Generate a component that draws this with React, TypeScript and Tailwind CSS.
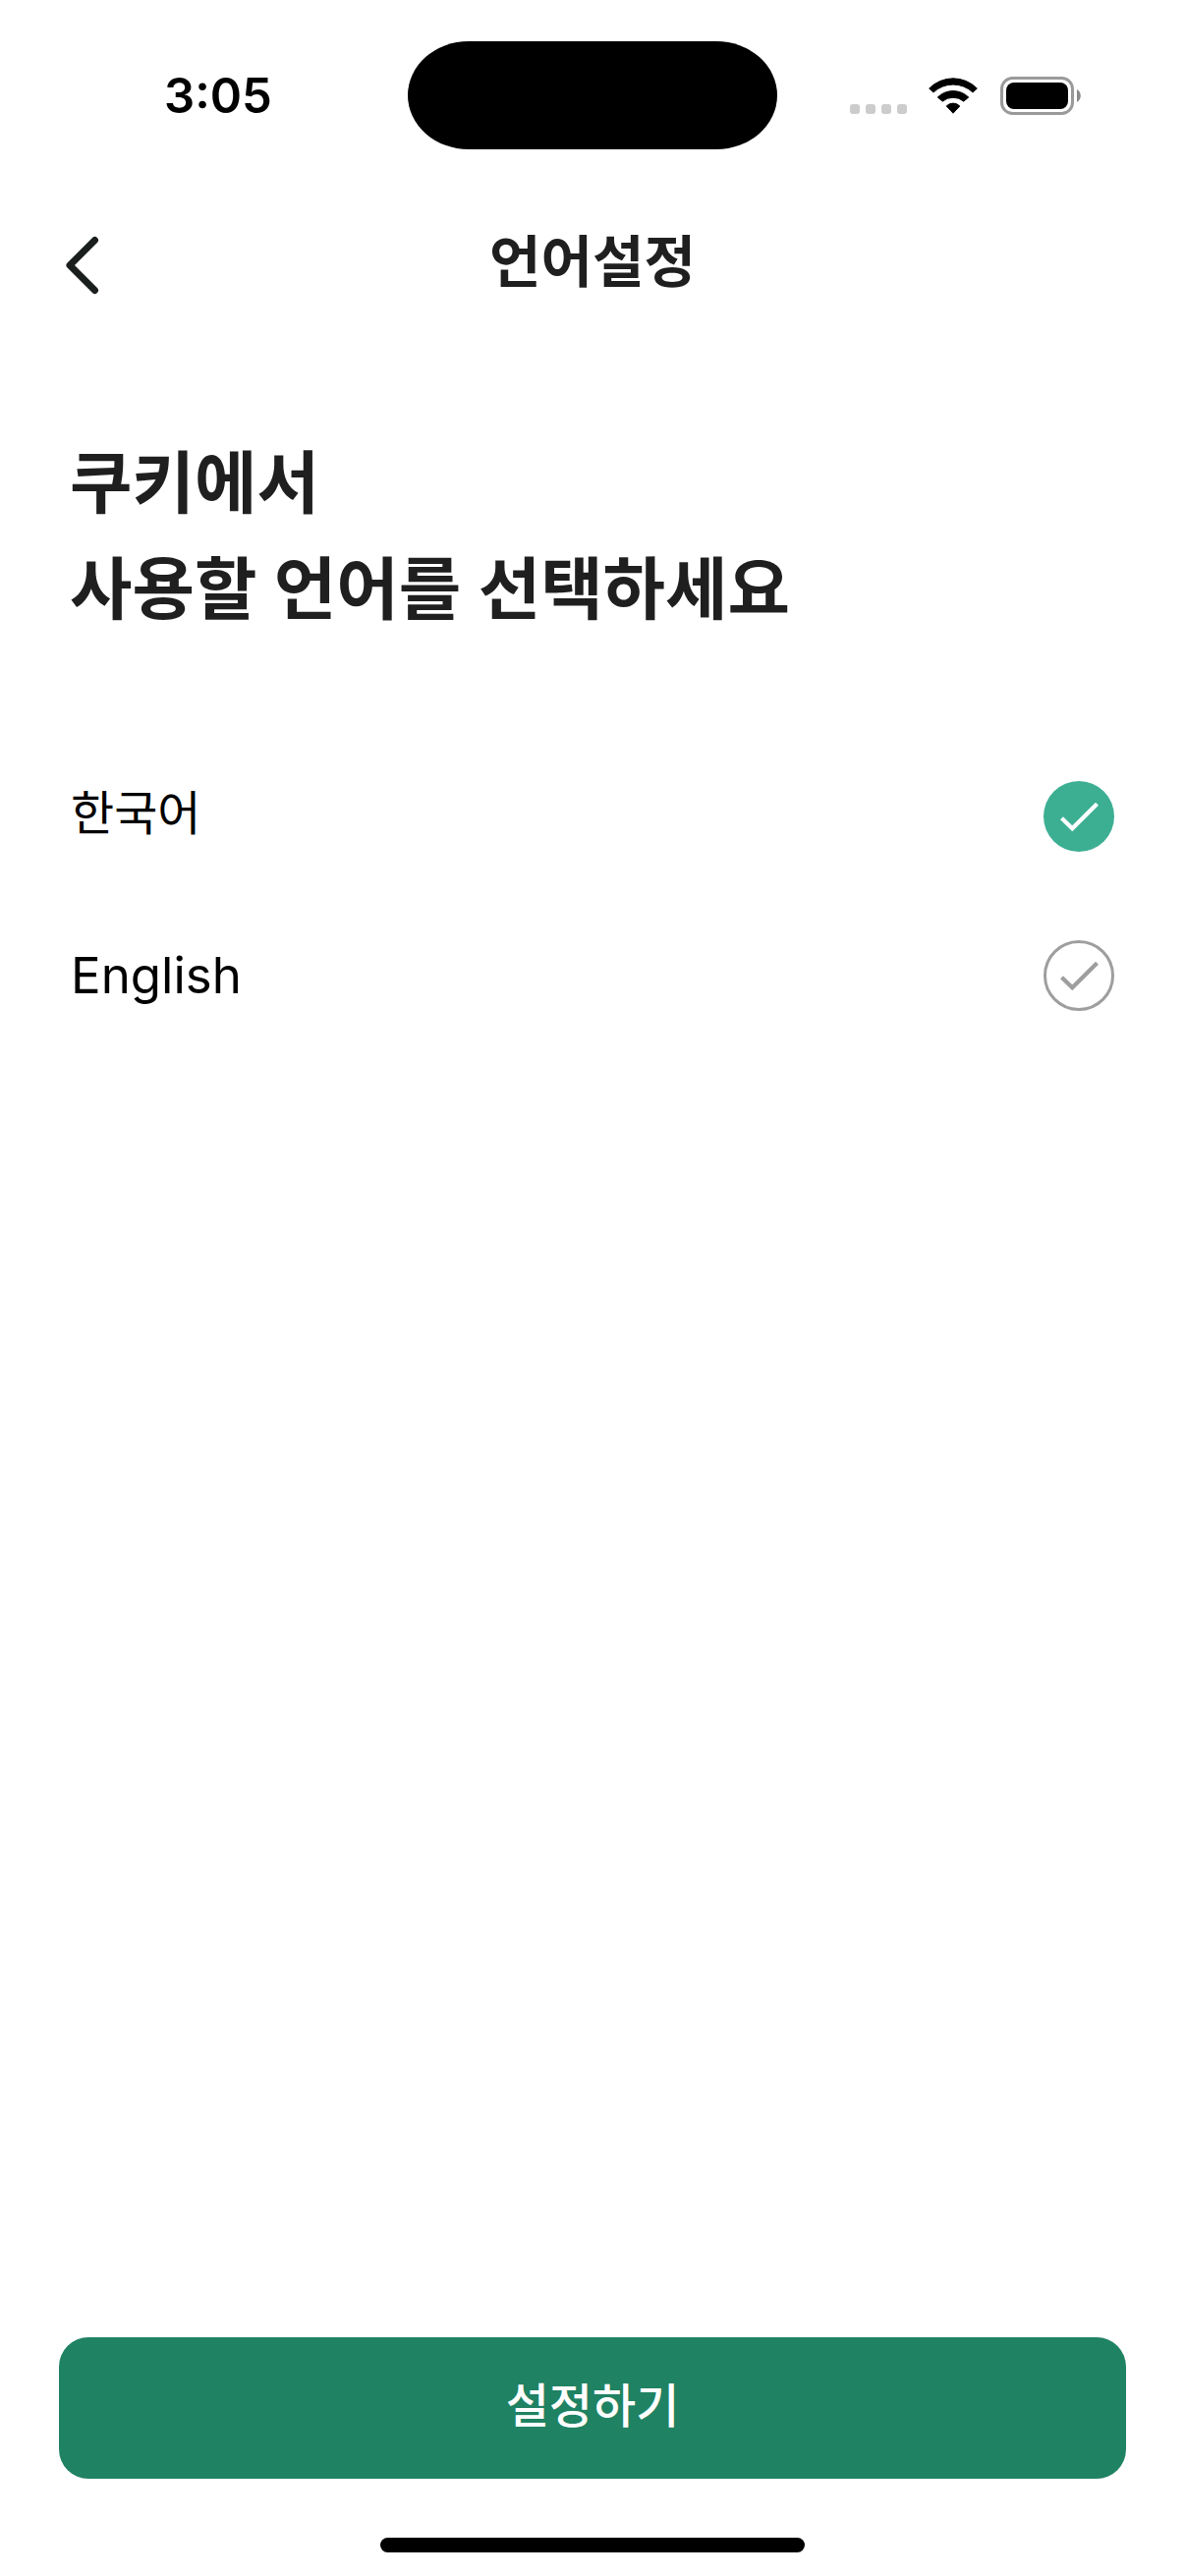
import { useState } from "react";

const languages = [
  { id: "ko", label: "한국어", textStyle: "pb-[6px] text-[48px] leading-[72px]" },
  { id: "en", label: "English", textStyle: "text-[51px] leading-[72px]" },
];

function WifiIcon() {
  return (
    <svg className="h-[37px] w-[50px]" viewBox="0 0 151 111" fill="#000" stroke="#000" strokeWidth="3" strokeLinejoin="round" aria-hidden="true">
      <path d="M2 33 A103 103 0 0 1 149 33 L136 45 A88 88 0 0 0 15 45 Z" />
      <path d="M28 60 A68 68 0 0 1 123 60 L108 72.500 A51 51 0 0 0 43 72.500 Z" />
      <path d="M55 87 A29 29 0 0 1 96 87 L75.500 109 Z" />
    </svg>
  );
}

function BatteryIcon() {
  return (
    <svg className="h-[39px] w-[82px]" viewBox="0 0 82 39" aria-hidden="true">
      <rect x="1.500" y="1.500" width="72" height="36" rx="11" fill="none" stroke="#9a9a9a" strokeWidth="3" />
      <rect x="6" y="6" width="63" height="27" rx="8" fill="#000" />
      <path d="M78 13 C83 15.500 83 23.500 78 26 Z" fill="#8a8a8a" />
    </svg>
  );
}

function CheckMark({ selected }: { selected: boolean }) {
  return (
    <svg className="pointer-events-none col-start-1 row-start-1 size-[72px]" viewBox="0 0 72 72" fill="none" aria-hidden="true">
      {selected ? (
        <circle cx="36" cy="36" r="36" fill="#3caf93" />
      ) : (
        <circle cx="36" cy="36" r="34.500" stroke="#9e9e9e" strokeWidth="3" />
      )}
      <path d="M18.500 37.700 L29.300 48.300 L54.500 23.200" stroke={selected ? "#fff" : "#9e9e9e"} strokeWidth="4.200" />
    </svg>
  );
}

export default function App() {
  const [language, setLanguage] = useState("ko");

  return (
    <div className="flex min-h-screen flex-col bg-white font-['Inter','Noto_Sans_CJK_KR',sans-serif] text-[#1f1f1f]">
      <div className="grid grid-cols-[1fr_376px_1fr] items-center pt-[42px] text-black">
        <time className="pt-[2px] pl-[167px] text-[49px] leading-[60px] font-semibold">3:05</time>
        <div className="h-[110px] rounded-[62px/55px] bg-black" />
        <div className="flex items-center justify-end pr-[106px]">
          <div className="mt-7 mr-[22px] flex gap-[6px]">
            <span className="size-[10px] rounded-[3px] bg-[#cccccc]" />
            <span className="size-[10px] rounded-[3px] bg-[#cccccc]" />
            <span className="size-[10px] rounded-[3px] bg-[#cccccc]" />
            <span className="size-[10px] rounded-[3px] bg-[#cccccc]" />
          </div>
          <div className="flex items-center gap-[23px]">
            <WifiIcon />
            <BatteryIcon />
          </div>
        </div>
      </div>

      <header className="mt-[34px] grid h-[168px] grid-cols-[1fr_auto_1fr] items-center px-[60px]">
        <button type="button" aria-label="뒤로" className="flex size-[72px] items-center">
          <svg className="h-[60px] w-[48px]" viewBox="0 0 48 60" fill="none" stroke="#1a1f1e" strokeWidth="7" strokeLinecap="round" strokeLinejoin="round" aria-hidden="true">
            <path d="M36.500 4.500 L11 30 L36.500 55.500" />
          </svg>
        </button>
        <h1 className="pb-[6px] text-[57px] leading-[80px] font-semibold">언어설정</h1>
      </header>

      <main className="flex grow flex-col px-[60px]">
        <h2 className="mt-[84px] px-[11px] text-[69px] leading-[108px] font-semibold">
          쿠키에서
          <br />
          사용할 언어를 선택하세요
        </h2>

        <fieldset aria-label="언어설정" className="mt-24 px-3 text-black">
          {languages.map(({ id, label, textStyle }) => (
            <label key={id} className="flex h-[162px] items-center justify-between">
              <span className={textStyle}>{label}</span>
              <span className="grid">
                <input
                  type="radio"
                  name="language"
                  value={id}
                  checked={language === id}
                  onChange={() => setLanguage(id)}
                  className="col-start-1 row-start-1 size-[72px] appearance-none rounded-full"
                />
                <CheckMark selected={language === id} />
              </span>
            </label>
          ))}
        </fieldset>

        <button type="button" className="mt-auto h-36 rounded-[30px] bg-[#1f8262] pb-1 text-[48px] leading-[72px] font-medium text-white">
          설정하기
        </button>
      </main>

      <div className="mx-auto mt-[60px] mb-6 h-[15px] w-[432px] rounded-full bg-black" />
    </div>
  );
}
